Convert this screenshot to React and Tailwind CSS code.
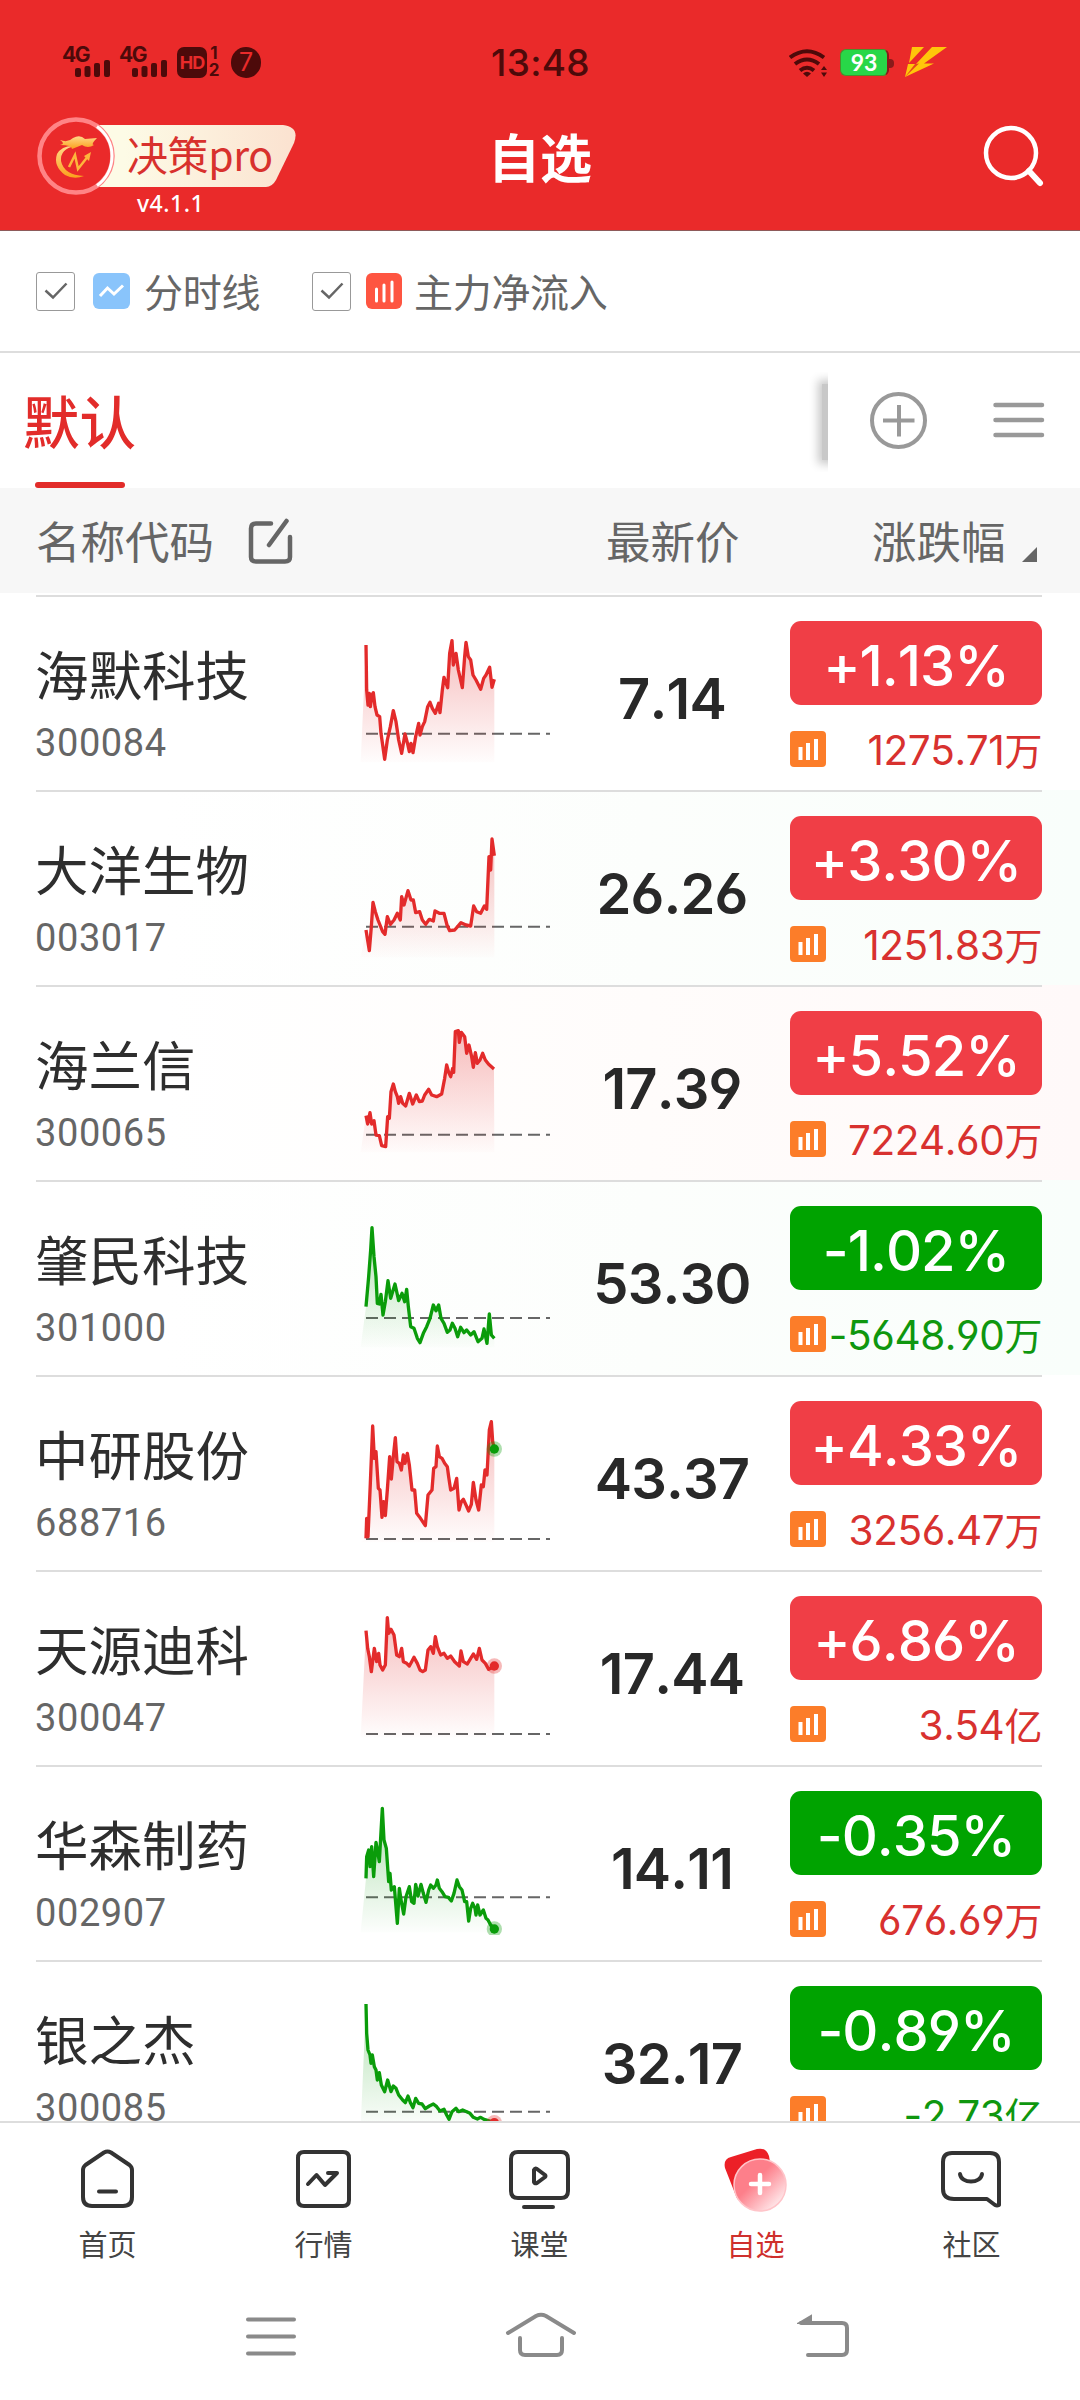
import React from "react";

const stocks = [
  {
    name: "海默科技", code: "300084", price: "7.14", change: "+1.13%", flow: "1275.71万", base: 416,
    points: "78,150 80,285 84,330 88,295 91,335 96,300 100,293 105,335 111,360 119,365 123,415 128,450 134,493 142,435 151,395 160,347 168,380 176,435 185,475 195,417 203,447 208,470 213,445 219,473 227,425 236,385 240,420 247,395 254,380 263,335 270,322 277,340 286,355 296,325 300,353 307,285 312,247 323,278 329,175 336,137 340,210 348,175 355,225 367,278 374,185 378,142 385,185 392,195 399,240 408,255 422,283 431,250 438,240 449,217 456,277 463,253",
  },
  {
    name: "大洋生物", code: "003017", price: "26.26", change: "+3.30%", flow: "1251.83万", base: 410, tint: "green",
    points: "78,420 82,445 88,482 94,410 99,337 106,365 114,390 120,405 128,425 135,433 142,380 151,403 162,390 172,370 181,390 185,320 192,345 204,302 213,330 220,330 227,368 239,365 247,390 257,403 268,388 280,393 285,363 298,370 312,370 321,405 329,422 344,420 363,398 378,405 392,408 401,348 410,365 422,370 433,348 440,358 447,200 452,240 456,147 463,197",
  },
  {
    name: "海兰信", code: "300065", price: "17.39", change: "+5.52%", flow: "7224.60万", base: 449, tint: "red",
    points: "78,392 83,417 90,383 95,417 102,407 108,450 118,452 125,482 137,485 143,395 148,400 153,320 160,297 166,320 172,335 176,355 182,335 188,355 197,363 208,325 218,357 229,330 238,350 247,348 254,330 266,313 275,330 290,335 305,327 314,280 320,240 326,262 332,275 338,250 341,262 346,140 355,137 358,172 364,142 374,155 380,205 387,180 395,215 400,247 406,203 412,235 420,225 428,205 436,225 446,238 462,252",
  },
  {
    name: "肇民科技", code: "301000", price: "53.30", change: "-1.02%", flow: "-5648.90万", base: 414, tint: "green",
    points: "78,380 86,290 92,210 96,143 102,230 108,290 112,370 118,372 123,343 129,405 136,365 144,302 152,355 165,312 176,362 186,340 194,365 200,328 205,380 212,440 222,445 232,475 240,488 250,460 260,440 270,415 280,375 288,392 296,375 303,415 312,430 322,457 330,450 337,430 345,445 353,470 362,442 372,458 380,450 392,465 402,455 414,485 426,475 432,447 441,490 448,402 454,465 463,475",
  },
  {
    name: "中研股份", code: "688716", price: "43.37", change: "+4.33%", flow: "3256.47万", base: 492, dot: [463, 222, "#0a9c0a"],
    points: "78,490 80,430 84,485 91,325 98,153 103,250 108,230 115,340 120,345 126,427 131,380 136,422 142,345 149,245 154,312 160,245 166,188 171,260 178,265 184,285 190,240 195,265 202,235 208,270 216,345 224,345 230,415 238,425 246,437 256,452 264,360 276,345 281,280 288,275 292,213 298,245 306,250 314,265 322,275 326,305 332,345 342,340 350,310 357,405 364,380 370,373 378,390 386,408 394,388 400,322 408,375 416,405 424,330 430,335 435,285 441,300 448,165 454,140 458,200 463,222",
  },
  {
    name: "天源迪科", code: "300047", price: "17.44", change: "+6.86%", flow: "3.54亿", base: 492, dot: [463, 288, "#e32b2b"],
    points: "78,182 83,235 88,260 94,305 103,235 110,275 116,250 120,285 128,300 136,285 142,143 146,190 153,178 162,195 170,255 178,260 185,235 190,275 200,280 208,288 215,275 222,262 232,280 240,300 248,305 256,300 264,240 272,230 280,250 286,200 292,230 302,255 312,250 322,265 332,258 344,275 358,288 363,243 370,275 382,282 392,265 400,252 410,268 418,235 426,270 436,280 446,298 463,288",
  },
  {
    name: "华森制药", code: "002907", price: "14.11", change: "-0.35%", flow: "676.69万", base: 397, dot: [463, 492, "#0a9c0a"],
    points: "78,340 80,275 86,255 90,305 95,245 101,335 108,232 118,290 127,130 132,225 139,250 146,350 150,325 154,375 163,365 172,475 178,370 184,410 191,447 198,395 208,365 215,410 222,415 227,358 234,393 243,358 250,385 258,412 266,375 272,360 280,370 288,360 292,345 298,370 306,380 315,395 325,397 334,408 342,385 351,345 358,365 366,375 374,410 380,410 386,468 392,430 398,415 405,430 408,450 413,420 420,450 430,435 438,460 444,465 452,480 463,492",
  },
  {
    name: "银之杰", code: "300085", price: "32.17", change: "-0.89%", flow: "-2.73亿", base: 455, dot: [463, 488, "#e32b2b"],
    points: "78,132 80,220 84,270 90,285 93,310 97,285 103,320 108,330 112,360 118,338 124,375 134,395 143,360 153,395 160,378 168,385 176,405 188,420 196,428 204,408 212,430 219,443 227,415 236,430 246,432 256,446 268,438 280,432 290,440 300,453 312,448 320,465 327,478 336,455 348,445 356,455 368,450 380,455 390,460 400,472 412,477 422,472 432,478 445,482 463,488",
  },
];

const tints = {
  green: "bg-linear-to-r from-white from-15% via-[#fcfefc] via-60% to-[#f9fefb]",
  red: "bg-linear-to-r from-white from-15% via-[#fffcfb] via-60% to-[#fff9f9]",
};

function Signal() {
  return (
    <div className="w-[57px] h-8 relative">
      <span className="absolute -left-px -top-[2px] text-[21px] leading-none font-bold tracking-[-1.5px]">4G</span>
      <svg className="absolute left-3 top-[14px]" width="36" height="17" fill="currentColor">
        <rect x="0" y="8" width="6" height="9" rx="2" />
        <rect x="9.500" y="6" width="6" height="11" rx="2" />
        <rect x="19" y="3" width="6" height="14" rx="2" />
        <rect x="29" y="0" width="6" height="17" rx="2" />
      </svg>
    </div>
  );
}

function StatusBar() {
  return (
    <div className="h-[108px] pt-[46px] pl-[63px] flex items-start text-[#4d0a0a] font-['Inter',sans-serif]">
      <Signal />
      <Signal />
      <div className="w-[30px] h-[31px] mt-px rounded-[7px] bg-[#4d0a0a] text-[#ea2a2a] text-[18px] font-bold tracking-[-1px] flex items-center justify-center">HD</div>
      <div className="w-[14px] h-8 flex flex-col items-center justify-between text-[17px] leading-[15px] font-bold">
        <span>1</span>
        <span>2</span>
      </div>
      <div className="ml-[10px] mt-px w-[30px] h-[31px] rounded-full bg-[#4d0a0a] text-[#ea2a2a] text-[25px] flex items-center justify-center">7</div>
      <div className="w-[98px] ml-[230px] mt-[-2px] text-[37px] leading-[37px] font-medium whitespace-nowrap tracking-[0.3px]">13:48</div>
      <svg className="ml-[200px] mt-[3px]" width="38" height="29" viewBox="0 0 38 29" fill="none" stroke="currentColor" strokeWidth="4">
        <path d="M1 8.500Q18 -4 35 8.500" />
        <path d="M6 15Q18 6 30 15" />
        <path d="M11 21.500Q18 16 25 21.500" />
        <path d="M14 24.500Q18 21 22 24.500L18 28Z" fill="currentColor" stroke="none" />
        <path d="M32 21L35 17L38 21ZM32 23.500H38L35 28Z" fill="currentColor" stroke="none" />
      </svg>
      <div className="ml-[13px] mt-[3px] w-[49px] h-[27px] rounded-[6px] border border-[#4b8f2c] border-r-2 border-r-[#8a1a1a] bg-[#28d748] text-white text-[23px] font-bold flex items-center justify-center font-['Lato',sans-serif]">93</div>
      <div className="mt-[13px] w-[5px] h-[9px] rounded-r-[4px] bg-[#8a1a1a]" />
      <svg className="ml-[11px]" width="43" height="31" viewBox="0 0 43 31" fill="#ffc60a">
        <path d="M7 1H19L4 17ZM27 1H42L19 17.500H29L0 31L3 18H11Z" />
        <path d="M14 17.500L0 31L10 18Z" fill="#e8461c" />
      </svg>
    </div>
  );
}

function Logo() {
  return (
    <div className="relative w-[262px] h-[104px]">
      <svg className="absolute left-0 top-0" width="262" height="84" viewBox="0 0 262 84" fill="none">
        <defs>
          <linearGradient id="banner" x1="0" x2="1">
            <stop offset="0.15" stopColor="#fdfbe6" />
            <stop offset="1" stopColor="#fbe2d0" />
          </linearGradient>
          <linearGradient id="gold" x1="0" y1="0" x2="0" y2="1">
            <stop offset="0" stopColor="#ffd98a" />
            <stop offset="1" stopColor="#fba11b" />
          </linearGradient>
        </defs>
        <path d="M58 9H247Q264 11 258 27L240 64Q236 71 230 71H58Z" fill="url(#banner)" />
        <circle cx="40" cy="40" r="36.500" fill="#ea2a2a" stroke="#ff8486" strokeWidth="4.500" />
        <path d="M61 10.500A36.500 36.500 0 0 1 61 69.500" stroke="#fff" strokeWidth="3" />
        <path d="M39 30Q24 33 25 45Q28 59 48 60Q38 64 29 59Q17 50 21 38Q26 29 39 30Z" fill="url(#gold)" />
        <path d="M24 24Q32 27 37 22Q44 18 49 23L61 22Q54 29 58 29Q52 33 46 29L36 33Q36 29 24 29Q30 28 24 24Z" fill="url(#gold)" />
        <path d="M33 51L39 39L42 53L53 39" stroke="#fdb63c" strokeWidth="2.500" />
        <path d="M48 40L55 36L53 45Z" fill="#fdb63c" />
      </svg>
      <span className="absolute left-[91px] top-[17px] text-[41px] leading-[41px] tracking-[-0.4px] text-[#d8312d] whitespace-nowrap">决策pro</span>
      <span className="absolute left-[101px] top-[76px] text-[23px] leading-[23px] text-white tracking-[0.5px] font-medium font-['Noto_Sans',sans-serif]">v4.1.1</span>
    </div>
  );
}

function CheckBox() {
  return (
    <span className="w-[39px] h-[39px] border-[1.5px] border-[#999] rounded-[3px] flex items-center justify-center">
      <svg width="24" height="18" viewBox="0 0 24 18" fill="none" stroke="#666" strokeWidth="2.500">
        <path d="M1.500 8.500L9 15.500L22.500 1.500" />
      </svg>
    </span>
  );
}

function BarsIcon({ color }) {
  return (
    <svg width="36" height="36" viewBox="0 0 36 36">
      <rect width="36" height="36" rx={color === "#fc7d29" ? 4 : 6} fill={color} />
      {color === "#fc7d29" ? (
        <path d="M10.500 16V29M18 12V29M26 8V29" stroke="#fff" strokeWidth="4" />
      ) : (
        <path d="M10.500 16V28M18 12V28M26 9V28" stroke="#fff" strokeWidth="3" strokeLinecap="round" />
      )}
    </svg>
  );
}

function Sparkline({ id, points, base, up, dot }) {
  const color = up ? "#e32b2b" : "#0a9c0a";
  return (
    <svg width="240" height="170" viewBox="0 0 720 510">
      <defs>
        <linearGradient id={id} gradientUnits="userSpaceOnUse" x1="0" y1="130" x2="0" y2="502">
          <stop offset="0" stopColor={color} stopOpacity="0.32" />
          <stop offset="1" stopColor={color} stopOpacity="0.01" />
        </linearGradient>
      </defs>
      <path d={`M78,${base}H630`} stroke="#666" strokeWidth="6" strokeDasharray="36 18" />
      <polygon points={`${points} 463,502 62,502`} fill={`url(#${id})`} />
      <polyline points={points} fill="none" stroke={color} strokeWidth="10" strokeLinejoin="round" />
      {dot && <circle cx={dot[0]} cy={dot[1]} r="23" fill={dot[2]} fillOpacity="0.33" />}
      {dot && <circle cx={dot[0]} cy={dot[1]} r="14" fill={dot[2]} />}
    </svg>
  );
}

function StockRow({ stock, index }) {
  const gain = stock.change[0] === "+";
  const outflow = stock.flow[0] === "-";
  return (
    <div className={`h-[195px] ${stock.tint ? tints[stock.tint] : ""}`}>
      <div className="ml-9 mr-[38px] h-[2px] bg-[#ddd]" />
      <div className="flex h-[193px]">
        <div className="w-[340px] shrink-0 pl-[35px] pt-[46px]">
          <div className="text-[53.500px] leading-[60px] text-[#2e2e2e] whitespace-nowrap">{stock.name}</div>
          <div className="mt-[20px] text-[38px] leading-[40px] text-[#666] font-['Roboto',sans-serif] tracking-[0.6px]">{stock.code}</div>
        </div>
        <div className="w-[240px] shrink-0 -mt-[2px]">
          <Sparkline id={`spark${index}`} points={stock.points} base={stock.base} up={gain} dot={stock.dot} />
        </div>
        <div className="w-[184px] shrink-0 pt-[72px] text-center text-[56px] leading-[60px] font-semibold text-[#282828] tracking-[-0.8px] whitespace-nowrap font-['Inter',sans-serif] [font-kerning:none] [font-feature-settings:'cv03','cv04']">
          {stock.price}
        </div>
        <div className="w-[252px] shrink-0 ml-[26px] pt-[24px]">
          <div className={`h-[84px] pt-[3px] rounded-[11px] text-white text-[56px] leading-[84px] text-center font-medium tracking-[-1px] font-['Inter',sans-serif] [font-kerning:none] [font-feature-settings:'cv03','cv04'] ${gain ? "bg-[#f03e46]" : "bg-[#00a300]"}`}>
            {stock.change}
          </div>
          <div className={`mt-[26px] h-[40px] flex justify-between whitespace-nowrap ${outflow ? "text-[#0f970f]" : "text-[#d8312f]"}`}>
            <span className="shrink-0"><BarsIcon color="#fc7d29" /></span>
            <span className="text-[40.500px] leading-[40px] tracking-[-0.4px] font-['Inter','Noto_Sans_CJK_SC',sans-serif] [font-kerning:none] [font-feature-settings:'cv03','cv04']">
              {stock.flow.slice(0, -1)}
              <span className="text-[38px]">{stock.flow.slice(-1)}</span>
            </span>
          </div>
        </div>
      </div>
    </div>
  );
}

const navItems = [
  {
    label: "首页",
    icon: (
      <path d="M6.500 17Q4 19 4 22V49Q4 58 13 58H44Q53 58 53 49V22Q53 19 50.500 17L32 4.500Q28.500 2.500 25 4.500ZM20 43.500H37" />
    ),
  },
  { label: "行情", icon: <path d="M9 4H48Q54 4 54 10V52Q54 58 48 58H9Q3 58 3 52V10Q3 4 9 4ZM13 36L21.500 27L30 37L42 25H33" /> },
  {
    label: "课堂",
    icon: <path d="M7 4H50Q57 4 57 11V43Q57 50 50 50H7Q0 50 0 43V11Q0 4 7 4ZM13 59H42M23 22V34Q24 36 26 35L34 29Q35 28 34 27L26 21Q24 20 23 22Z" />,
  },
  { label: "自选", active: true },
  {
    label: "社区",
    icon: <path d="M9 5H47Q56 5 56 14V57Q54 58 52 57L44 51H11Q0 51 0 41V14Q0 5 9 5ZM17 26C18 36 38 36 39 26" />,
  },
];

function BottomNav() {
  return (
    <nav className="h-[149px] shrink-0 border-t-2 border-[#ddd] bg-white flex">
      {navItems.map((item) => (
        <div key={item.label} className="w-[216px] pt-[25px] pr-px flex flex-col items-center">
          {item.active ? (
            <svg width="66" height="66" viewBox="0 0 66 66">
              <defs>
                <linearGradient id="ball" x1="0.2" y1="0.2" x2="0.9" y2="0.9">
                  <stop offset="0.3" stopColor="#fd7f8a" />
                  <stop offset="1" stopColor="#fff0f2" />
                </linearGradient>
              </defs>
              <path d="M8 9L34 1Q43 -1 46 8L47 14L20 52Q15 54 13 48L2 20Q0 11 8 9Z" fill="#ec2027" />
              <circle cx="37" cy="37" r="26" fill="url(#ball)" stroke="#ffc4c9" strokeWidth="1.500" />
              <path d="M28 36H46M37 27V45" stroke="#fff" strokeWidth="4.500" strokeLinecap="round" />
            </svg>
          ) : (
            <svg className="overflow-visible" width="57" height="66" viewBox="0 0 57 66" fill="none" stroke="#333" strokeWidth="4" strokeLinecap="round" strokeLinejoin="round">
              {item.icon}
            </svg>
          )}
          <div className={`mt-[13px] text-[29px] leading-[32px] ${item.active ? "text-[#cf302d]" : "text-[#444]"}`}>{item.label}</div>
        </div>
      ))}
    </nav>
  );
}

function App() {
  return (
    <div className="w-[1080px] h-[2400px] bg-white overflow-hidden flex flex-col font-['Noto_Sans_CJK_SC',sans-serif]">
      <header className="h-[231px] shrink-0 bg-[#ea2a2a] border-b border-[#8d5a5a]">
        <StatusBar />
        <div className="flex pl-9 pt-2 h-[122px]">
          <Logo />
          <h1 className="w-[484px] pt-[12px] text-center text-[52px] leading-[56px] font-bold text-white">自选</h1>
          <svg className="ml-[200px] mt-[8px]" width="64" height="64" viewBox="0 0 64 64" fill="none" stroke="#fff" strokeWidth="4.500">
            <circle cx="29" cy="29" r="25" />
            <path d="M47 47L58 59" strokeWidth="6" strokeLinecap="round" />
          </svg>
        </div>
      </header>

      {/* chart toggles */}
      <div className="h-[122px] shrink-0 border-b-2 border-[#ddd] pl-9 flex items-center text-[39px] text-[#666]">
        <CheckBox />
        <svg className="ml-[18px]" width="37" height="36" viewBox="0 0 37 36">
          <rect width="37" height="36" rx="6" fill="#89c4fb" />
          <path d="M7 23L14.500 15L21 21L30 12.500" fill="none" stroke="#fff" strokeWidth="3" />
        </svg>
        <span className="ml-[14px] w-[168px] pb-[3px] leading-[48px] tracking-[-0.3px]">分时线</span>
        <CheckBox />
        <span className="ml-[15px]"><BarsIcon color="#fe5541" /></span>
        <span className="ml-[12px] pb-[3px] leading-[48px] tracking-[-0.3px]">主力净流入</span>
      </div>

      {/* groups */}
      <div className="h-[135px] shrink-0 flex">
        <div className="w-[160px] flex flex-col items-start pl-[23px]">
          <span className="h-[129px] pt-[33px] text-[56.500px] leading-[66px] font-medium text-[#e22c2a]">默认</span>
          <span className="ml-[12px] w-[90px] h-[6px] rounded-full bg-[#e22c2a]" />
        </div>
        <div className="ml-[648px] mt-[19px] w-[20px] h-[100px] overflow-hidden flex justify-end">
          <div className="w-[10px] h-[76px] mt-[12px] -mr-[4px] shrink-0 bg-[#c8c8c8] shadow-[0_0_10px_4px_#c8c8c8]" />
        </div>
        <svg className="ml-[42px] mt-[38px]" width="58" height="58" viewBox="0 0 58 58" fill="none" stroke="#999" strokeWidth="4">
          <circle cx="28.500" cy="29.500" r="26.500" />
          <path d="M13 29.500H44.500M29 14V45.500" />
        </svg>
        <svg className="ml-[65px] mt-[46px]" width="52" height="42" fill="none" stroke="#999" strokeWidth="4.500" strokeLinecap="round">
          <path d="M2.500 6H49M2.500 21H49M2.500 36H49" />
        </svg>
      </div>

      <div className="h-[105px] shrink-0 bg-[#f7f7f7] pl-9 flex items-center text-[44.500px] leading-[58px] text-[#666]">
        <span className="w-[212px] pb-[2px]">名称代码</span>
        <svg width="46" height="48" viewBox="0 0 46 48" fill="none" stroke="#666" strokeWidth="4.500" strokeLinecap="round" strokeLinejoin="round">
          <path d="M23 6.500H8Q3 6.500 3 11.500V40Q3 44.500 8 44.500H37Q42 44.500 42 40V20M38.500 4L21 28" />
        </svg>
        <span className="ml-[312px] w-[266px] pb-[2px]">最新价</span>
        <span className="pb-[2px]">涨跌幅</span>
        <svg className="ml-[16px] mt-[28px]" width="16" height="16" fill="#666">
          <path d="M15 0V15H0Z" />
        </svg>
      </div>

      <main className="h-[1528px] pt-[2px] shrink-0 overflow-hidden">
        {stocks.map((s, i) => (
          <StockRow key={s.code} stock={s} index={i} />
        ))}
      </main>

      <BottomNav />

      {/* system buttons */}
      <div className="flex h-[130px] pt-[41px]">
        <svg className="ml-[245px]" width="52" height="48" fill="none" stroke="#8a8a8a" strokeWidth="4" strokeLinecap="round">
          <path d="M3 8.500H49M3 25.500H49M3 42.500H49" />
        </svg>
        <svg className="ml-[208px]" width="72" height="48" fill="none" stroke="#8a8a8a" strokeWidth="4" strokeLinecap="round">
          <path d="M3 22L31 5Q36 2.500 41 5L69 22M15 27V39Q15 44 20 44H52Q57 44 57 39V27" />
        </svg>
        <svg className="ml-[220px] mt-[2px]" width="54" height="48" fill="none" stroke="#8a8a8a" strokeWidth="4" strokeLinecap="round">
          <path d="M4 10H45Q50 10 50 15V37Q50 42 45 42H11" />
          <path d="M2 10L14 3V10Z" fill="#8a8a8a" strokeWidth="2" />
        </svg>
      </div>
    </div>
  );
}

export default App;
